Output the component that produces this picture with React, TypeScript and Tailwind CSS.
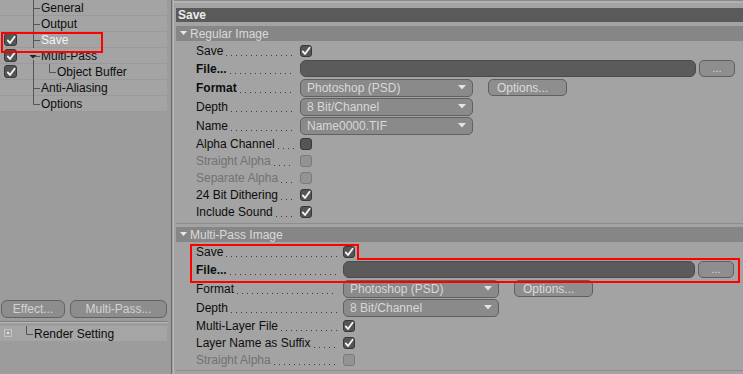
import React from "react";

function Check({ checked, disabled, big }: { checked?: boolean; disabled?: boolean; big?: boolean }) {
  const base = big ? "w-[13px] h-[13px]" : "w-[12px] h-[12px]";
  const color = disabled
    ? "bg-[#939393] border-[#7b7b7b]"
    : "bg-[#555555] border-[#383838]";
  return (
    <div className={`${base} ${color} border rounded-[3px] flex items-center justify-center shrink-0`}>
      {checked && (
        <svg width="10" height="10" viewBox="0 0 10 10">
          <path d="M1.8 5.4 L4 8 L8.6 1.8" stroke="#f4f4f4" strokeWidth="1.9" fill="none" strokeLinecap="round" strokeLinejoin="round" />
        </svg>
      )}
    </div>
  );
}

function Select({ value, w }: { value: string; w: string }) {
  return (
    <div className={`${w} h-[18px] rounded-[5px] border border-[#616161] bg-[#8a8a8a] flex items-center pl-[6px] pr-[6px] text-[#d8d8d8] shrink-0`}>
      <span className="flex-1 whitespace-nowrap leading-none">{value}</span>
      <svg width="8" height="5" viewBox="0 0 8 5">
        <path d="M0 0 L8 0 L4 4.5 Z" fill="#e4e4e4" />
      </svg>
    </div>
  );
}

function Btn({ label, w, className = "" }: { label: string; w: string; className?: string }) {
  return (
    <div className={`${w} h-[17px] rounded-[5px] border border-[#5f5f5f] bg-[#8e8e8e] text-[#dcdcdc] flex items-center leading-none whitespace-nowrap shrink-0 ${className}`}>
      {label}
    </div>
  );
}

type Row = {
  label: string;
  kind: "check" | "file" | "select";
  bold?: boolean;
  checked?: boolean;
  disabled?: boolean;
  value?: string;
  options?: boolean;
};

function Section({ title, rows, labelW, selectW, fileW }: { title: string; rows: Row[]; labelW: string; selectW: string; fileW: string }) {
  return (
    <div className="flex flex-col">
      <div className="h-[15px] bg-[#868686] ml-[2px] flex items-center text-[#dadada] leading-none">
        <svg width="8" height="5" viewBox="0 0 8 5" className="ml-[4px] mr-[2px]">
          <path d="M0 0 L7 0 L3.5 4 Z" fill="#e8e8e8" />
        </svg>
        {title}
      </div>
      <div className="flex flex-col pl-[22px] pt-[1px]">
        {rows.map((r, i) => (
          <div
            key={i}
            className={`flex items-center ${r.kind === "check" ? "h-[17px]" : "h-[19px]"}`}
          >
            <div className={`${labelW} mr-[6px] flex items-center shrink-0`}>
              <span
                className={`whitespace-nowrap leading-none ${r.bold ? "font-bold" : ""} ${r.disabled ? "text-[#727272]" : "text-[#0d0d0d]"}`}
              >
                {r.label}
              </span>
              <div className="flex-1 h-[1px] mt-[9px] ml-[3px] bg-[linear-gradient(to_right,#3a3a3a_1px,transparent_1px)] bg-[length:5px_1px] bg-repeat-x" />
            </div>
            {r.kind === "check" && <Check checked={r.checked} disabled={r.disabled} />}
            {r.kind === "file" && (
              <div className="flex items-center">
                <div className={`${fileW} h-[17px] rounded-[6px] bg-[#5b5b5b] border border-[#4b4b4b] shrink-0`} />
                <Btn label="..." w="w-[36px]" className="ml-[3px] justify-center text-[11px]" />
              </div>
            )}
            {r.kind === "select" && (
              <div className="flex items-center">
                <Select value={r.value || ""} w={selectW} />
                {r.options && <Btn label="Options..." w="w-[79px]" className="ml-[15px] pl-[8px]" />}
              </div>
            )}
          </div>
        ))}
      </div>
    </div>
  );
}

function TreeRow({
  label,
  check,
  selected,
  kind,
}: {
  label: string;
  check?: boolean;
  selected?: boolean;
  kind: "mid" | "last" | "tri" | "sub";
}) {
  return (
    <div className="h-[16px] flex items-center bg-[#a4a4a4] border-b border-[#9a9a9a] w-[167px]">
      <div className="w-[28px] h-full flex items-center pl-[4px] shrink-0">{check && <Check checked big />}</div>
      <svg width={kind === "sub" ? 29 : 13} height="16" viewBox={`0 0 ${kind === "sub" ? 29 : 13} 16`} className="shrink-0">
        {kind === "last" ? (
          <path d="M5.5 0 V8.5 H12" stroke="#555" strokeWidth="1" fill="none" />
        ) : kind === "sub" ? (
          <>
            <path d="M5.5 0 V16" stroke="#555" strokeWidth="1" fill="none" />
            <path d="M21.5 0 V8.5 H28" stroke="#555" strokeWidth="1" fill="none" />
          </>
        ) : kind === "tri" ? (
          <>
            <path d="M5.5 12 V16" stroke="#555" strokeWidth="1" fill="none" />
            <path d="M7 8.5 H12" stroke="#555" strokeWidth="1" fill="none" />
            <path d="M1.5 7 L8.5 7 L5 10.5 Z" fill="#222" />
          </>
        ) : (
          <path d="M5.5 0 V16 M5.5 8.5 H12" stroke="#555" strokeWidth="1" fill="none" />
        )}
      </svg>
      <span className={`whitespace-nowrap leading-none ${selected ? "text-[#f4f4f4]" : "text-[#0d0d0d]"}`}>{label}</span>
    </div>
  );
}

export default function App() {
  const regular: Row[] = [
    { label: "Save", kind: "check", checked: true },
    { label: "File...", kind: "file", bold: true },
    { label: "Format", kind: "select", bold: true, value: "Photoshop (PSD)", options: true },
    { label: "Depth", kind: "select", value: "8 Bit/Channel" },
    { label: "Name", kind: "select", value: "Name0000.TIF" },
    { label: "Alpha Channel", kind: "check", checked: false },
    { label: "Straight Alpha", kind: "check", disabled: true },
    { label: "Separate Alpha", kind: "check", disabled: true },
    { label: "24 Bit Dithering", kind: "check", checked: true },
    { label: "Include Sound", kind: "check", checked: true },
  ];
  const multi: Row[] = [
    { label: "Save", kind: "check", checked: true },
    { label: "File...", kind: "file", bold: true },
    { label: "Format", kind: "select", value: "Photoshop (PSD)", options: true },
    { label: "Depth", kind: "select", value: "8 Bit/Channel" },
    { label: "Multi-Layer File", kind: "check", checked: true },
    { label: "Layer Name as Suffix", kind: "check", checked: true },
    { label: "Straight Alpha", kind: "check", disabled: true },
  ];

  return (
    <div className="relative w-[743px] h-[374px] overflow-hidden flex font-['Liberation_Sans',Arial,sans-serif] text-[12px] bg-[#a2a2a2]">
      {/* Left panel */}
      <div className="w-[171px] h-full bg-[#9c9c9c] flex flex-col shrink-0">
        <div className="flex flex-col">
          <TreeRow label="General" kind="mid" />
          <TreeRow label="Output" kind="mid" />
          <TreeRow label="Save" kind="mid" check selected />
          <TreeRow label="Multi-Pass" kind="tri" check />
          <TreeRow label="Object Buffer" kind="sub" check />
          <TreeRow label="Anti-Aliasing" kind="mid" />
          <TreeRow label="Options" kind="last" />
        </div>
        <div className="h-[188px]" />
        <div className="flex gap-[5px] pl-[1px] h-[18px]">
          <div className="w-[64px] h-[18px] rounded-[6px] border border-[#626262] bg-[#8d8d8d] text-[#d2d2d2] flex items-center justify-center leading-none">
            Effect...
          </div>
          <div className="w-[97px] h-[18px] rounded-[6px] border border-[#626262] bg-[#8d8d8d] text-[#d2d2d2] flex items-center justify-center leading-none">
            Multi-Pass...
          </div>
        </div>
        <div className="mt-[3px] w-[168px] h-[2px] border-t border-[#7c7c7c] border-b border-b-[#b8b8b8]" />
        <div className="mt-[3px] h-[15px] w-[167px] bg-[#a5a5a5] flex items-center">
          <svg width="9" height="9" viewBox="0 0 9 9" className="ml-[4px] shrink-0">
            <rect x="0.5" y="0.5" width="7" height="7" fill="none" stroke="#e2e2e2" strokeWidth="1" strokeDasharray="1 1" />
            <rect x="3" y="3" width="2" height="2" fill="#e2e2e2" />
          </svg>
          <svg width="21" height="15" viewBox="0 0 21 15" className="shrink-0">
            <path d="M13.5 0 V8.5 H20" stroke="#555" strokeWidth="1" fill="none" />
          </svg>
          <span className="text-[#0d0d0d] whitespace-nowrap leading-none">Render Setting</span>
        </div>
      </div>

      {/* Divider */}
      <div className="w-[1px] h-full bg-[#6c6c6c] shrink-0" />
      <div className="w-[1px] h-full bg-[#9f9f9f] shrink-0" />
      <div className="w-[1px] h-full bg-[#bababa] shrink-0" />

      {/* Right panel */}
      <div className="flex-1 h-full bg-[#a3a3a3] flex flex-col">
        <div className="h-[1px] bg-[#8a8a8a]" />
        <div className="h-[2px] bg-[#b2b2b2]" />
        <div className="h-[5px]" />
        <div className="h-[14px] bg-[#5a5a5a] ml-[2px] text-[#ececec] font-bold leading-none flex items-center pl-[2px]">Save</div>
        <div className="h-[4px]" />
        <Section title="Regular Image" rows={regular} labelW="w-[98px]" selectW="w-[173px]" fileW="w-[396px]" />
        <div className="h-[3px]" />
        <div className="h-[1px] bg-[#8c8c8c] ml-[2px]" />
        <div className="h-[3px]" />
        <Section title="Multi-Pass Image" rows={multi} labelW="w-[141px]" selectW="w-[156px]" fileW="w-[352px]" />
        <div className="h-[2px]" />
        <div className="h-[1px] bg-[#8c8c8c] ml-[2px]" />
      </div>

      {/* Red annotation overlays */}
      <div className="absolute left-[1px] top-[32px] w-[102px] h-[21px] border-2 border-[#ff0000]" />
      <svg className="absolute left-0 top-0 pointer-events-none" width="743" height="374">
        <path d="M191 245 H358 V259 H739 V282 H191 Z" fill="none" stroke="#ff0000" strokeWidth="2" />
      </svg>
    </div>
  );
}
